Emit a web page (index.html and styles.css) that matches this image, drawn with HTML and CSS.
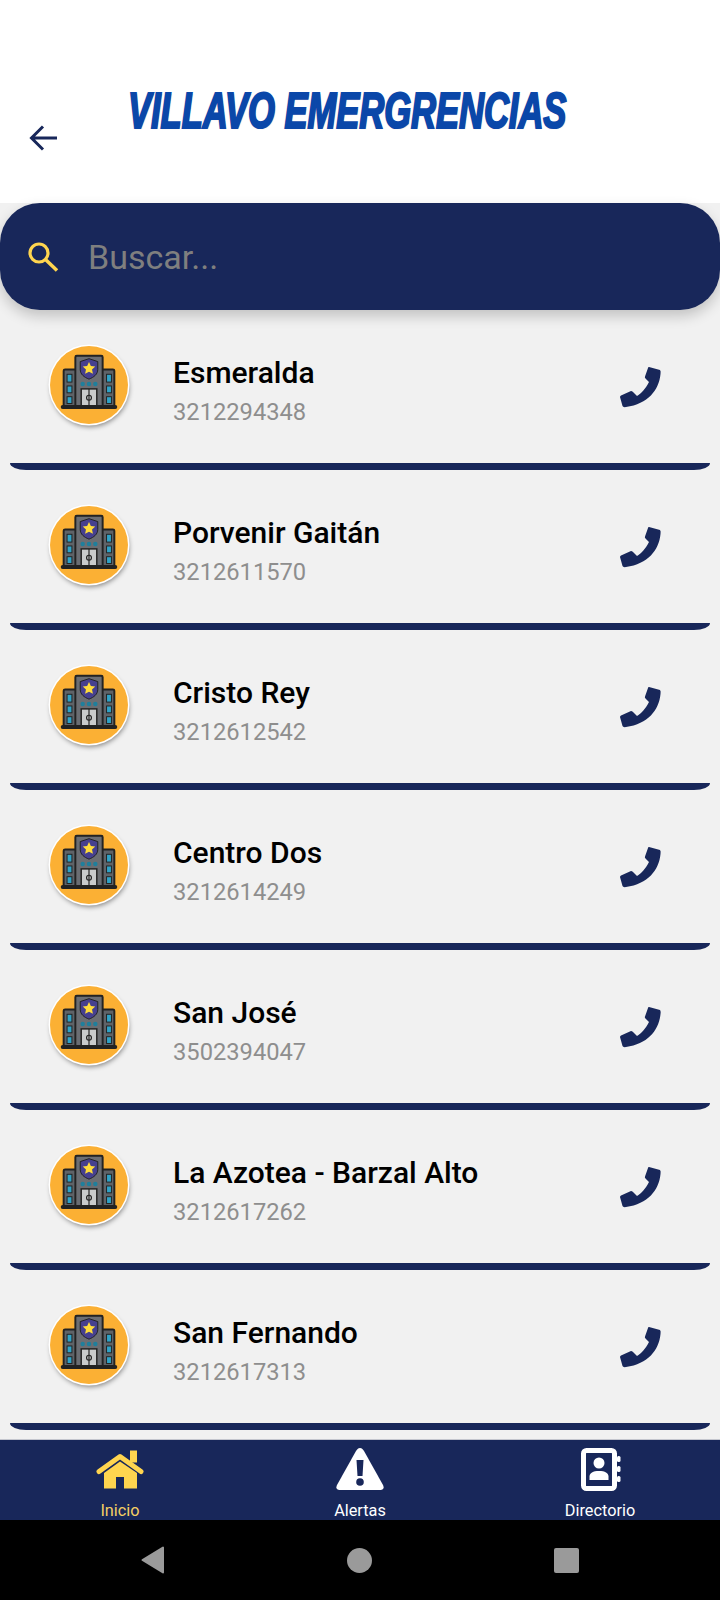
FILE: index.html
```html
<!DOCTYPE html>
<html lang="es">
<head>
<meta charset="utf-8">
<title>Villavo Emergencias</title>
<link rel="stylesheet" href="styles.css">
</head>
<body>
<svg class="defs" width="0" height="0" aria-hidden="true">
  <symbol id="building" viewBox="0 0 80 80">
    <rect x="14" y="24" width="52" height="38" rx="1.5" fill="#5f6368" stroke="#222" stroke-width="2"/>
    <rect x="26" y="10" width="28" height="52" rx="1.5" fill="#6b6e73" stroke="#222" stroke-width="2"/>
    <path d="M40 13l9 3v8c0 5-4 8-9 10-5-2-9-5-9-10v-8z" fill="#46408f" stroke="#222" stroke-width="1"/>
    <path d="M40 16.500l1.900 4.100 4.500.5-3.300 3 .9 4.400-4-2.200-4 2.200.9-4.400-3.300-3 4.500-.5z" fill="#ffdc3c"/>
    <circle cx="33.500" cy="39" r="2.300" fill="#1f7f9c"/>
    <circle cx="40" cy="39" r="2.300" fill="#1f7f9c"/>
    <circle cx="46.500" cy="39" r="2.300" fill="#1f7f9c"/>
    <rect x="32" y="44" width="16" height="18" fill="#c9cbcc" stroke="#222" stroke-width="1.500"/>
    <path d="M40 44v18" stroke="#222" stroke-width="1.200"/>
    <circle cx="40" cy="53" r="2.500" fill="none" stroke="#222" stroke-width="1.200"/>
    <rect x="17.500" y="29" width="5" height="8" fill="#2fa3c7" stroke="#222" stroke-width="1"/>
    <rect x="17.500" y="41" width="5" height="7" fill="#2fa3c7" stroke="#222" stroke-width="1"/>
    <rect x="17.500" y="52" width="5" height="7" fill="#2fa3c7" stroke="#222" stroke-width="1"/>
    <rect x="58" y="29" width="5" height="8" fill="#2fa3c7" stroke="#222" stroke-width="1"/>
    <rect x="58" y="41" width="5" height="7" fill="#2fa3c7" stroke="#222" stroke-width="1"/>
    <rect x="58" y="52" width="5" height="7" fill="#2fa3c7" stroke="#222" stroke-width="1"/>
    <rect x="11" y="60.500" width="58" height="4" rx="2" fill="#222"/>
  </symbol>
  <symbol id="phone" viewBox="0 0 41 42">
    <path d="M29 1L40 4Q41 5 40.500 8C39 24 28 38 6 41Q3 41.500 2.500 40L0 31Q0 30 1 29.500L11 25Q12 25 13 26L17 30C21 28 26 22 29 16L25.500 12.500Q24.500 11.500 25 10.500L28 2Q28.300.8 29 1Z" fill="currentColor"/>
  </symbol>
</svg>

<main class="screen">
  <header class="top">
    <button class="back" aria-label="Volver">
      <svg width="32" height="32" viewBox="0 0 32 32"><path d="M29 16H4M15 4.500L3.500 16 15 27.500" fill="none" stroke="#18275a" stroke-width="3"/></svg>
    </button>
    <h1 class="title">VILLAVO EMERGRENCIAS</h1>
  </header>

  <div class="search-wrap">
    <div class="search">
      <svg class="search-icon" width="32" height="30" viewBox="0 0 32 30"><circle cx="11" cy="11" r="9" fill="none" stroke="#ffd54f" stroke-width="3.200"/><path d="M17.500 17.500L29 28.500" stroke="#ffd54f" stroke-width="3.500"/></svg>
      <span class="placeholder">Buscar...</span>
    </div>
  </div>

  <section class="list">
    <article class="row">
      <div class="avatar"><svg width="78" height="78"><use href="#building"/></svg></div>
      <div class="info"><div class="name">Esmeralda</div><div class="tel">3212294348</div></div>
      <svg class="call" width="41" height="42"><use href="#phone"/></svg>
    </article>
    <article class="row">
      <div class="avatar"><svg width="78" height="78"><use href="#building"/></svg></div>
      <div class="info"><div class="name">Porvenir Gaitán</div><div class="tel">3212611570</div></div>
      <svg class="call" width="41" height="42"><use href="#phone"/></svg>
    </article>
    <article class="row">
      <div class="avatar"><svg width="78" height="78"><use href="#building"/></svg></div>
      <div class="info"><div class="name">Cristo Rey</div><div class="tel">3212612542</div></div>
      <svg class="call" width="41" height="42"><use href="#phone"/></svg>
    </article>
    <article class="row">
      <div class="avatar"><svg width="78" height="78"><use href="#building"/></svg></div>
      <div class="info"><div class="name">Centro Dos</div><div class="tel">3212614249</div></div>
      <svg class="call" width="41" height="42"><use href="#phone"/></svg>
    </article>
    <article class="row">
      <div class="avatar"><svg width="78" height="78"><use href="#building"/></svg></div>
      <div class="info"><div class="name">San José</div><div class="tel">3502394047</div></div>
      <svg class="call" width="41" height="42"><use href="#phone"/></svg>
    </article>
    <article class="row">
      <div class="avatar"><svg width="78" height="78"><use href="#building"/></svg></div>
      <div class="info"><div class="name">La Azotea - Barzal Alto</div><div class="tel">3212617262</div></div>
      <svg class="call" width="41" height="42"><use href="#phone"/></svg>
    </article>
    <article class="row">
      <div class="avatar"><svg width="78" height="78"><use href="#building"/></svg></div>
      <div class="info"><div class="name">San Fernando</div><div class="tel">3212617313</div></div>
      <svg class="call" width="41" height="42"><use href="#phone"/></svg>
    </article>
  </section>

  <nav class="tabs">
    <a class="tab tab-active">
      <svg class="tab-icon" width="48" height="44" viewBox="0 0 48 44"><path d="M34 3.500h7v12h-7z" fill="#ffd54f"/><path d="M3 24.500L24 9.500 45 24.500" fill="none" stroke="#ffd54f" stroke-width="5" stroke-linecap="round" stroke-linejoin="round"/><path d="M8 26L24 14.500 41 26V41.500H28V30H20V41.500H8Z" fill="#ffd54f"/></svg>
      <span>Inicio</span>
    </a>
    <a class="tab">
      <svg class="tab-icon" width="48" height="44" viewBox="0 0 48 44"><path d="M24 1C26 1 27 2.500 28 4L47 38C48.500 41 47 43 44.500 43H3.500C1 43-.5 41 1 38L20 4C21 2.500 22 1 24 1Z" fill="#fff"/><path d="M20.500 13H27.500L26.500 29H21.500Z" fill="#18275a"/><circle cx="24" cy="35" r="3.800" fill="#18275a"/></svg>
      <span>Alertas</span>
    </a>
    <a class="tab">
      <svg class="tab-icon" width="48" height="44" viewBox="0 0 48 44"><rect x="7.500" y="3.500" width="31" height="38" rx="3" fill="none" stroke="#fff" stroke-width="5"/><rect x="41" y="9" width="3.500" height="6" rx="1.500" fill="#fff"/><rect x="41" y="19" width="3.500" height="6" rx="1.500" fill="#fff"/><rect x="41" y="29" width="3.500" height="6" rx="1.500" fill="#fff"/><circle cx="23" cy="16" r="5.500" fill="#fff"/><path d="M13.500 33V29.500C13.500 26 17 24 23 24S32.500 26 32.500 29.500V33Z" fill="#fff"/></svg>
      <span>Directorio</span>
    </a>
  </nav>

  <footer class="system">
    <svg width="24" height="28" viewBox="0 0 24 28"><path d="M22 1.500V26.500L1.500 14Z" fill="#9a9a9a" stroke="#9a9a9a" stroke-width="2" stroke-linejoin="round"/></svg>
    <span class="sys-circle"></span>
    <span class="sys-square"></span>
  </footer>
</main>
</body>
</html>
```
FILE: styles.css
```css
* { box-sizing: border-box; }

html, body {
  margin: 0;
  padding: 0;
  background: #fff;
}

.defs {
  position: absolute;
}

.screen {
  width: 720px;
  height: 1600px;
  display: flex;
  flex-direction: column;
  overflow: hidden;
  font-family: Roboto, "Liberation Sans", sans-serif;
}

.top {
  height: 203px;
  flex: none;
  background: #fff;
  position: relative;
}

.back {
  position: absolute;
  left: 28px;
  top: 122px;
  padding: 0;
  border: 0;
  background: none;
  line-height: 0;
}

.title {
  margin: 0;
  padding: 84px 0 0 128px;
  font-family: "Liberation Sans", sans-serif;
  font-size: 50px;
  line-height: 54px;
  font-weight: 700;
  font-style: italic;
  color: #0a47a9;
  white-space: nowrap;
  -webkit-text-stroke: 2.2px #0a47a9;
  text-shadow: 1px 1px 1px rgba(120, 60, 100, .45);
  transform: scaleX(.69);
  transform-origin: 128px 0;
}

.search-wrap {
  flex: none;
  background: #f1f1f1;
  position: relative;
  z-index: 1;
}

.search {
  height: 107px;
  display: flex;
  align-items: center;
  gap: 28px;
  padding: 0 0 0 28px;
  background: #18275a;
  border-radius: 40px;
  box-shadow: 0 6px 14px rgba(0, 0, 0, .2);
}

.search-icon {
  flex: none;
}

.placeholder {
  font-size: 34px;
  color: #7f7f7f;
}

.list {
  flex: 1;
  min-height: 0;
  overflow: hidden;
  background: #f1f1f1;
}

.row {
  height: 160px;
  margin: 0 10px;
  padding: 36px 49px 0 40px;
  display: flex;
  align-items: flex-start;
  background: #f1f1f1;
  border-bottom: 7px solid #18275a;
  border-radius: 0 0 16px 16px / 0 0 7px 7px;
}

.avatar {
  width: 78px;
  height: 78px;
  flex: none;
  border-radius: 50%;
  background: #fbb034;
  box-shadow: 0 0 0 1.5px #fff, 1px 3px 5px rgba(0, 0, 0, .45);
  line-height: 0;
}

.info {
  flex: 1;
  min-width: 0;
  margin-left: 45px;
  padding-top: 8px;
}

.name {
  font-size: 30px;
  line-height: 38px;
  font-weight: 500;
  color: #000;
}

.tel {
  margin-top: 5px;
  font-size: 23.700px;
  line-height: 30px;
  color: #8e8e8e;
}

.call {
  flex: none;
  margin-top: 20px;
  color: #18275a;
}

.tabs {
  height: 81px;
  flex: none;
  display: grid;
  grid-template-columns: repeat(3, 1fr);
  background: #18275a;
  border-top: 1px solid #c4c6ce;
  overflow: hidden;
}

.tab {
  display: flex;
  flex-direction: column;
  align-items: center;
  padding-top: 7px;
  font-size: 16.300px;
  line-height: 18px;
  color: #fff;
}

.tab-active {
  color: #f4cf63;
}

.tab-icon {
  flex: none;
  margin-bottom: 11px;
}

.system {
  height: 80px;
  flex: none;
  display: flex;
  justify-content: center;
  align-items: center;
  gap: 182px;
  background: #000;
}

.sys-circle {
  width: 25px;
  height: 25px;
  border-radius: 50%;
  background: #9a9a9a;
}

.sys-square {
  width: 25px;
  height: 25px;
  border-radius: 2px;
  background: #9a9a9a;
}
```
